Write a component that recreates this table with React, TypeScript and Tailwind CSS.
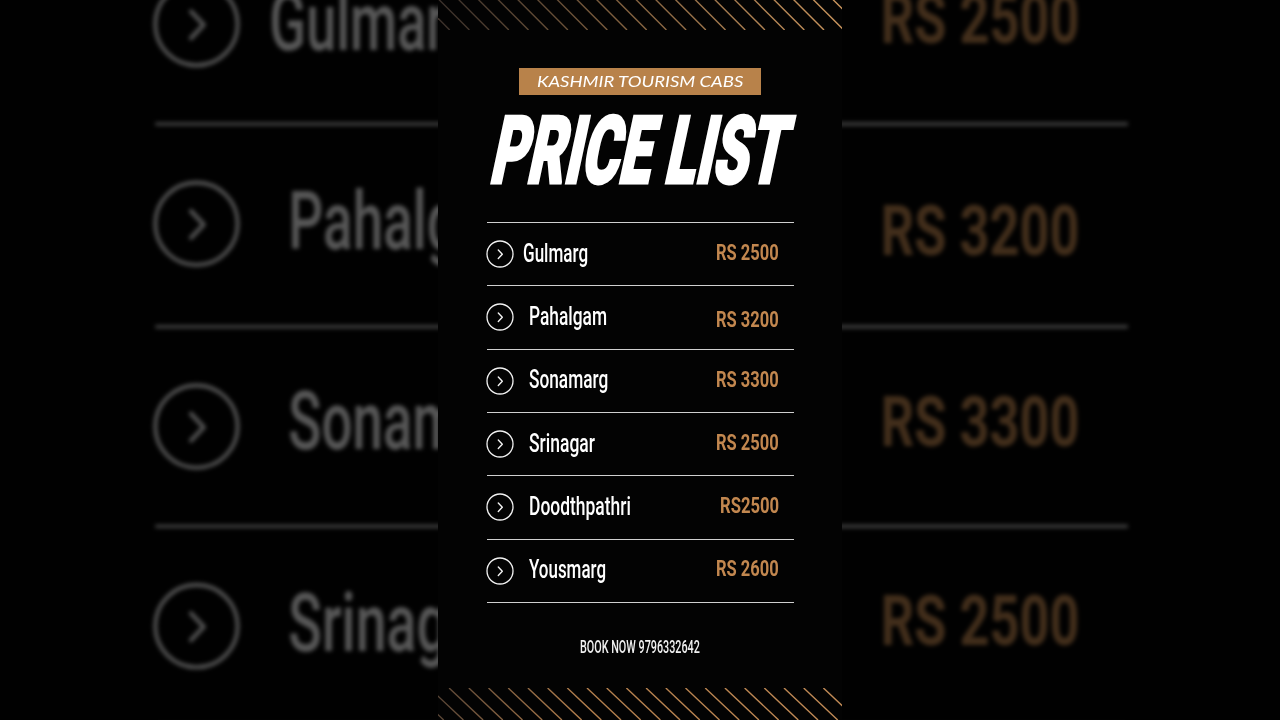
import React, { useLayoutEffect, useRef, useState } from "react";

type FitProps = {
  children: React.ReactNode;
  w: number;
  className?: string;
  skew?: number;
};

function Fit({ children, w, className = "", skew = 0 }: FitProps) {
  const ref = useRef<HTMLSpanElement>(null);
  const [s, setS] = useState(1);
  useLayoutEffect(() => {
    const measure = () => {
      const el = ref.current;
      if (el && el.offsetWidth) setS(w / el.offsetWidth);
    };
    measure();
    if (document.fonts) document.fonts.ready.then(measure);
  }, [w]);
  return (
    <span className="inline-block shrink-0" style={{ width: w }}>
      <span
        ref={ref}
        className={`inline-block w-max origin-left whitespace-nowrap leading-none ${className}`}
        style={{ transform: `skewX(${-skew}deg) scaleX(${s})` }}
      >
        {children}
      </span>
    </span>
  );
}

function Stripes({ top }: { top: boolean }) {
  const id = top ? "stripeTop" : "stripeBottom";
  const h = top ? 30 : 32;
  const start = top ? -40 : -48;
  const lines = [];
  for (let x = start; x < 404; x += 19.7) {
    lines.push(
      <line
        key={x}
        x1={x}
        y1={top ? -2 : 0}
        x2={x + h + 2}
        y2={h}
        stroke={`url(#${id})`}
        strokeWidth="1.4"
      />
    );
  }
  return (
    <svg width="404" height={h} viewBox={`0 0 404 ${h}`} className="block shrink-0">
      <defs>
        <linearGradient id={id} x1="0" y1="0" x2="404" y2="0" gradientUnits="userSpaceOnUse">
          {top ? (
            <>
              <stop offset="0" stopColor="#3a302a" />
              <stop offset="0.45" stopColor="#80603f" />
              <stop offset="1" stopColor="#cc975f" />
            </>
          ) : (
            <>
              <stop offset="0" stopColor="#5a4636" />
              <stop offset="0.35" stopColor="#b37f4d" />
              <stop offset="1" stopColor="#c28b56" />
            </>
          )}
        </linearGradient>
      </defs>
      {lines}
    </svg>
  );
}

function ChevronCircle() {
  return (
    <svg width="28" height="28" viewBox="0 0 28 28" className="-ml-px block shrink-0">
      <circle cx="14" cy="14" r="13" fill="none" stroke="#f2f2f2" strokeWidth="1.3" />
      <path
        d="M12.3 10 L16.3 14.2 L12.3 18.4"
        fill="none"
        stroke="#f2f2f2"
        strokeWidth="1.4"
        strokeLinecap="round"
        strokeLinejoin="round"
      />
    </svg>
  );
}

const rows = [
  { name: "Gulmarg", nw: 65, price: "RS 2500", pw: 63, gap: "ml-[9px]", pshift: "" },
  { name: "Pahalgam", nw: 78, price: "RS 3200", pw: 63, gap: "ml-[15px]", pshift: "mt-[8px]" },
  { name: "Sonamarg", nw: 79, price: "RS 3300", pw: 63, gap: "ml-[15px]", pshift: "mt-[1px]" },
  { name: "Srinagar", nw: 66, price: "RS 2500", pw: 63, gap: "ml-[15px]", pshift: "" },
  { name: "Doodthpathri", nw: 102, price: "RS2500", pw: 59, gap: "ml-[15px]", pshift: "mt-[1px]" },
  { name: "Yousmarg", nw: 77, price: "RS 2600", pw: 63, gap: "ml-[15px]", pshift: "" },
];

function Card() {
  return (
    <div className="flex h-[720px] w-[404px] shrink-0 flex-col items-center overflow-hidden bg-[#030303] font-['Roboto',sans-serif]">
      <Stripes top />
      <div className="mt-[38px] flex h-[27px] w-[242px] items-center justify-center bg-[#b8824a]">
        <Fit w={206} className="font-['Lato',sans-serif] text-[15px] italic text-white">
          KASHMIR TOURISM CABS
        </Fit>
      </div>
      <div className="flex h-[127px] w-full items-center justify-center pb-[16px] pl-[4px]">
        <Fit
          w={294}
          skew={12}
          className="text-[94px] font-black text-white [-webkit-text-stroke:3px_white]"
        >
          PRICE LIST
        </Fit>
      </div>
      <div className="w-[307px]">
        <div className="h-px bg-[#cfcfcf]" />
        {rows.map((r) => (
          <div
            key={r.name}
            className="flex h-[63.33px] items-center border-b border-[#cfcfcf]"
          >
            <ChevronCircle />
            <div className={`${r.gap} flex`}>
              <Fit w={r.nw} className="text-[26px] font-medium text-white">
                {r.name}
              </Fit>
            </div>
            <div className={`ml-auto mr-[15px] flex ${r.pshift}`}>
              <Fit w={r.pw} className="text-[22px] font-bold text-[#c2874f]">
                {r.price}
              </Fit>
            </div>
          </div>
        ))}
      </div>
      <div className="flex h-[85px] w-full items-center justify-center pt-[6px]">
        <Fit w={120} className="text-[18px] font-medium text-[#f0f0f0]">
          BOOK NOW 9796332642
        </Fit>
      </div>
      <div className="mt-auto">
        <Stripes top={false} />
      </div>
    </div>
  );
}

export default function App() {
  return (
    <div className="relative h-[720px] w-[1280px] overflow-hidden bg-black">
      <div className="absolute inset-0 flex items-center justify-center">
        <div className="shrink-0 scale-[3.168] blur-[0.6px] brightness-[0.34]">
          <Card />
        </div>
      </div>
      <div className="relative flex h-full justify-center">
        <Card />
      </div>
    </div>
  );
}
